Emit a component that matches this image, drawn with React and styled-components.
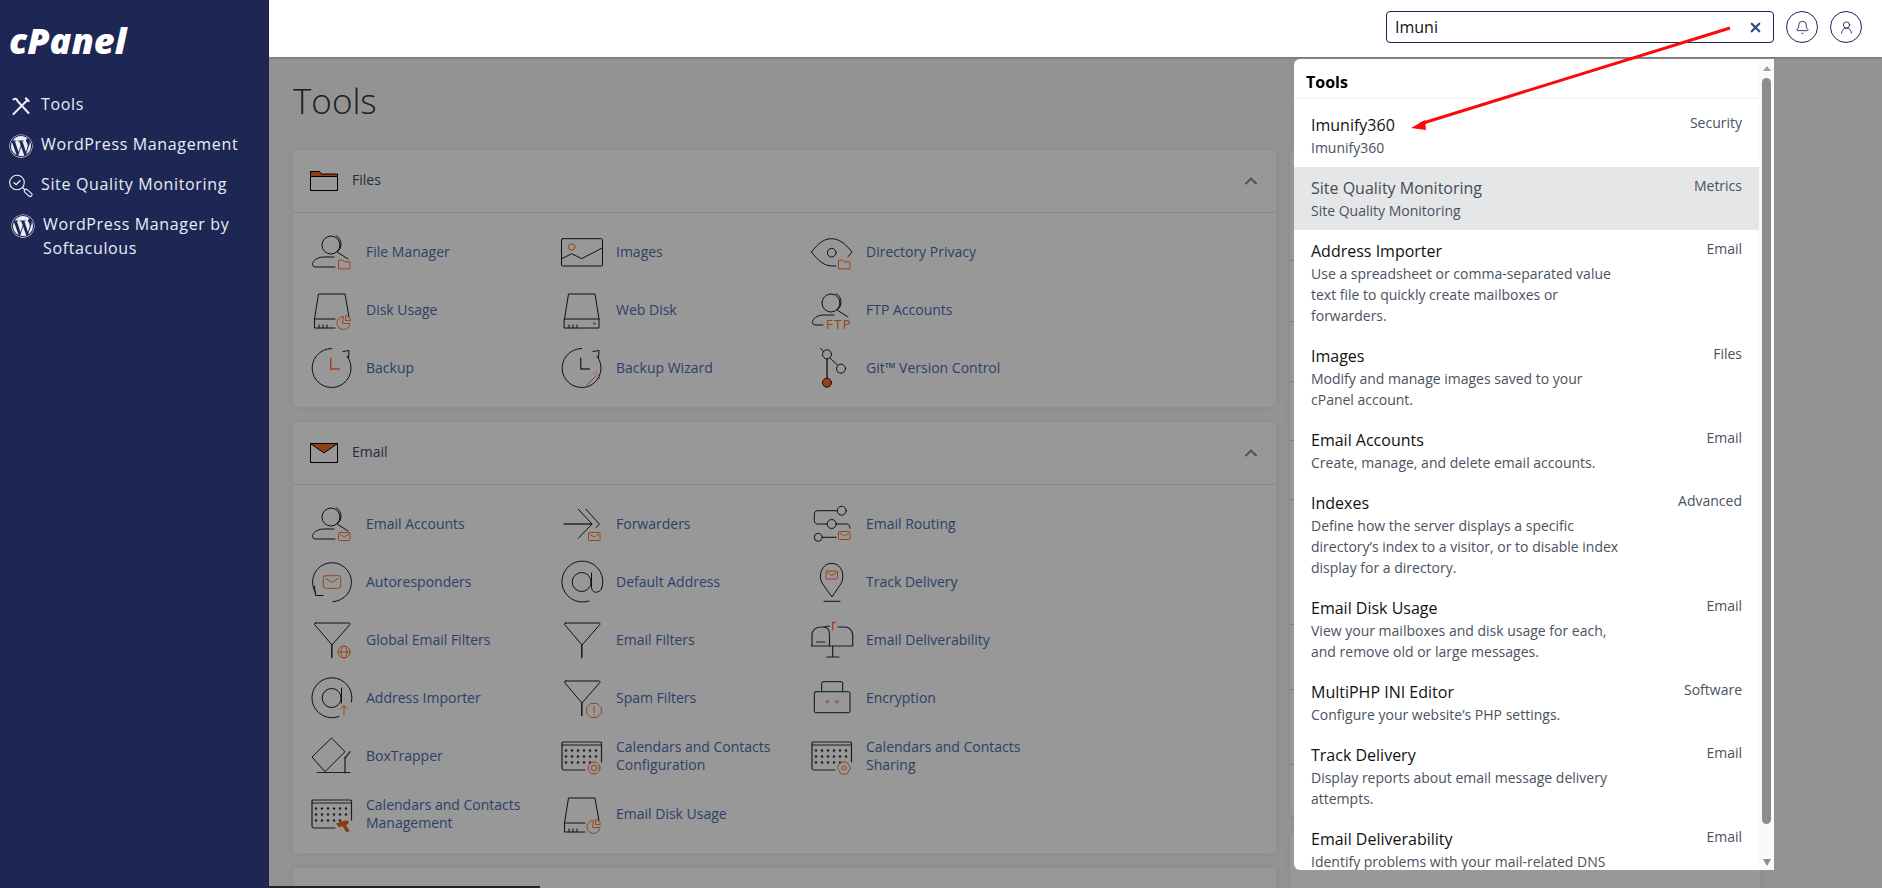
import React from "react";
import styled, { createGlobalStyle } from "styled-components";
import { Bell, ChevronUp, UserRound, X } from "lucide-react";
import { FaWordpress } from "react-icons/fa";

const ORANGE = "#ff7430";
const INK = "#1c1c1c";

const GlobalStyle = createGlobalStyle`
  html, body { margin: 0; padding: 0; height: 100%; }
  body { font-family: "Open Sans", "Liberation Sans", sans-serif; background: #f6f6f6; }
  * { box-sizing: border-box; }
`;

const Page = styled.div`
  position: relative;
  display: flex;
  width: 100%;
  height: 100vh;
  overflow: hidden;
`;

const Sidebar = styled.aside`
  flex: 0 0 269px;
  background: #1e2653;
  color: #eef1f8;
  padding: 0 8px 0 9px;
`;

const Logo = styled.div`
  height: 92px;
  padding-top: 21px;
  font-size: 36px;
  line-height: 40px;
  font-weight: 800;
  font-style: italic;
  letter-spacing: 0;
  color: #fff;
`;

const NavList = styled.nav`
  display: flex;
  flex-direction: column;
  gap: 14px;
`;

const NavItem = styled.div`
  display: flex;
  align-items: flex-start;
  gap: 8px;
  padding-left: ${(p) => (p.$shift ? "2px" : "0")};
  font-size: 16px;
  line-height: 24px;
  letter-spacing: 0.65px;
  color: #e9edf6;
`;

const NavIcon = styled.span`
  flex: 0 0 24px;
  height: 24px;
  margin-top: 2px;
  display: flex;
  align-items: center;
  justify-content: center;
`;

const Main = styled.div`
  flex: 1;
  min-width: 0;
  display: flex;
  flex-direction: column;
`;

const TopBar = styled.header`
  position: relative;
  z-index: 3;
  flex: 0 0 57px;
  background: #fff;
  display: flex;
  align-items: center;
  justify-content: flex-end;
  gap: 12px;
  padding: 0 20px 3px 0;
  box-shadow: 0 1px 2px rgba(0, 0, 0, 0.25);
`;

const SearchBox = styled.div`
  width: 388px;
  height: 32px;
  border: 1px solid #1e2653;
  border-radius: 4px;
  display: flex;
  align-items: center;
  justify-content: space-between;
  padding: 0 10px 0 8px;
  font-size: 16px;
  color: #111;
`;

const RoundButton = styled.span`
  width: 32px;
  height: 32px;
  border: 1px solid #1e2653;
  border-radius: 50%;
  display: flex;
  align-items: center;
  justify-content: center;
  color: #1e2653;
`;

const Content = styled.main`
  position: relative;
  flex: 1;
  min-height: 0;
  overflow: hidden;
  padding: 20px 0 0 24px;
`;

const Shade = styled.div`
  position: absolute;
  inset: 0;
  z-index: 1;
  background: rgba(0, 0, 0, 0.4);
`;

const Title = styled.h1`
  margin: 0 0 25px;
  font-size: 35px;
  line-height: 48px;
  font-weight: 300;
  color: #333;
`;

const Columns = styled.div`
  display: flex;
  gap: 14px;
  align-items: flex-start;
`;

const LeftColumn = styled.div`
  flex: 0 0 983px;
  display: flex;
  flex-direction: column;
  gap: 15px;
`;

const RightColumn = styled.div`
  flex: 0 0 470px;
  display: flex;
  flex-direction: column;
  gap: 15px;
`;

const Card = styled.section`
  background: #fdfdfd;
  border-radius: 4px;
  box-shadow: 0 0 8px rgba(0, 0, 0, 0.08);
`;

const CardHeader = styled.div`
  height: 63px;
  display: flex;
  align-items: center;
  gap: 14px;
  padding: 0 15px 0 17px;
  border-bottom: 1px solid #dfe3ea;
  font-size: 14px;
  color: #3b4a66;
`;

const HeaderLabel = styled.span`
  flex: 1;
  margin-top: -3px;
`;

const CardBody = styled.div`
  display: grid;
  grid-template-columns: repeat(3, 250px);
  grid-auto-rows: 58px;
  padding: 10px 18px;
`;

const ToolLink = styled.a`
  display: flex;
  align-items: center;
  gap: 15px;
  font-size: 14px;
  line-height: 18px;
  color: #4c6cad;
`;

const IconSvg = styled.svg`
  flex: 0 0 40px;
  width: 40px;
  height: 40px;
  overflow: visible;
  fill: none;
  stroke: ${INK};
  stroke-width: 1;
  stroke-linecap: round;
  stroke-linejoin: round;
`;

const EmptyCard = styled(Card)`
  height: ${(p) => p.$height}px;
`;

const SideRow = styled.div`
  height: ${(p) => p.$height}px;
  border-bottom: 1px solid #d4d8df;
`;

const Dropdown = styled.div`
  position: absolute;
  z-index: 2;
  top: 2px;
  left: 1025px;
  width: 480px;
  height: 811px;
  display: flex;
  background: #fff;
  border-radius: 6px 0 0 6px;
  overflow: hidden;
`;

const ResultsPane = styled.div`
  flex: 1;
  min-width: 0;
  overflow: hidden;
`;

const ResultsHeading = styled.div`
  height: 40px;
  padding: 6px 0 0 12px;
  border-bottom: 1px solid #f1f1f1;
  font-size: 16px;
  line-height: 24px;
  font-weight: 700;
  color: #000;
  display: flex;
  align-items: center;
  margin-bottom: 5px;
`;

const ResultRow = styled.div`
  display: flex;
  justify-content: space-between;
  padding: 9px 17px;
  background: ${(p) => (p.$active ? "#e5e6e8" : "transparent")};
`;

const ResultText = styled.div`
  width: 314px;
`;

const ResultName = styled.div`
  font-size: 16px;
  line-height: 24px;
  color: ${(p) => (p.$active ? "#444b55" : "#111")};
`;

const ResultDesc = styled.div`
  font-size: 14px;
  line-height: 21px;
  color: #4a5260;
`;

const ResultGroup = styled.div`
  margin-top: -1px;
  font-size: 14px;
  line-height: 21px;
  color: #4a5260;
`;

const ScrollTrack = styled.div`
  flex: 0 0 15px;
  background: #fafafa;
  display: flex;
  flex-direction: column;
  align-items: center;
  padding: 7px 0 4px;
`;

const ScrollThumb = styled.div`
  width: 9px;
  height: 746px;
  margin: 7px 0 auto;
  border-radius: 5px;
  background: #8d8d8d;
`;

const ScrollArrow = styled.div`
  width: 0;
  height: 0;
  border-left: 4.5px solid transparent;
  border-right: 4.5px solid transparent;
  ${(p) =>
    p.$down
      ? "border-top: 7px solid #8d8d8d;"
      : "border-bottom: 5px solid #a0a0a0;"}
`;

const BottomStrip = styled.div`
  position: absolute;
  z-index: 2;
  left: 0;
  bottom: 0;
  width: 271px;
  height: 2px;
  background: #232323;
`;

const Annotation = styled.svg`
  position: absolute;
  inset: 0;
  z-index: 5;
  width: 100%;
  height: 100%;
  pointer-events: none;
`;

// small orange badges shared by the tool icons
const MiniFolder = () => (
  <path stroke={ORANGE} d="M27.5 36.5v-8.3h4.6l1.2 1.6h5.7v6.7z" />
);

const MiniMail = ({ x = 27.5, y = 28.5 }) => (
  <g stroke={ORANGE} transform={`translate(${x} ${y})`}>
    <rect width="11.5" height="8" rx="1" />
    <path d="M1.5 1.8l4.3 2.8 4.3-2.8" />
  </g>
);

const Person = () => (
  <>
    <circle cx="20" cy="13" r="9" />
    <path d="M25 3.5c6 3 7 12.500 1 16.500l11 7" />
    <path d="M24 35H5c-3 0-4-2-3.500-3.500C3 27 8 25 13 25h10" />
  </>
);

const DiskShell = ({ closed }) => (
  <>
    <path d={closed ? "M3.500 29L7.500 4H34l4 25" : "M3.500 29L7.500 4H34l4 23"} />
    <path d={closed ? "M3.500 29H38v9H3.500z" : "M24 29H3.500v9H24"} />
    <path d="M8 38v-3M12 38v-3M16 38v-3" />
  </>
);

const DiskPie = () => (
  <g stroke={ORANGE}>
    <path d="M32 26.500a6.500 6.500 0 1 0 7 7h-7z" />
    <path d="M35 25.500c2.500.5 4 2.500 4.500 5H35z" />
  </g>
);

const ClockRing = () => (
  <>
    <path d="M20.700.5A19.500 19.500 0 1 0 36 8" />
    <path d="M32 3.500l6-1 -.5 7.500" />
  </>
);

const Funnel = () => (
  <>
    <path d="M4.500 3h33.500c1 0 1.300 1 .7 1.700L21 25 3.700 4.700C3.100 4 3.500 3 4.500 3z" />
    <path d="M20.800 25v12.500" strokeWidth="1.600" stroke="#3a3a3a" />
  </>
);

const AtRing = ({ bare }) => (
  <>
    <path
      d={
        bare
          ? "M40.500 27A20.500 20.500 0 1 0 28 39"
          : "M40.500 24A20 20 0 1 0 28 38.500"
      }
    />
    <circle cx="20.700" cy="20" r="9.500" />
    <path
      d={bare ? "M30.500 11v14c0 4 3 6 6 5s4-3 4-4" : "M30.500 10v15"}
    />
  </>
);

const KeyDots = () => {
  const dots = [];
  [14.5, 20.5, 26.5].forEach((y, row) => {
    const count = row === 2 ? 5 : 6;
    for (let i = 0; i < count; i++) {
      dots.push(<circle key={`${row}-${i}`} cx={5 + i * 6} cy={y} r="1.200" />);
    }
  });
  return <g fill="#333" stroke="none">{dots}</g>;
};

const Keyboard = () => (
  <>
    <path d="M24 34H3c-1 0-2-1-2-2V7c0-.5.5-1 1-1h37c1 0 1.500.5 1.500 1v19" strokeWidth="1.200" stroke="#333" />
    <path d="M1 9h39.500" stroke="#333" />
    <KeyDots />
  </>
);

const ICONS = {
  fileManager: (<><Person /><MiniFolder /></>),
  images: (
    <>
      <rect x="0.500" y="6.700" width="41" height="27.300" rx="1" />
      <path d="M.7 26.700l10-5 10 5 21-11" />
      <circle cx="10.700" cy="15" r="3.200" stroke={ORANGE} />
    </>
  ),
  privacy: (
    <>
      <path d="M.5 20C8 10 14 6.700 20.700 6.700S34 11 41 20c-1 2-2.500 3.500-4 4.500" />
      <path d="M.5 20c7.500 10 13.500 14 21.500 14h3" />
      <circle cx="20.700" cy="20.700" r="4.300" />
      <MiniFolder />
    </>
  ),
  diskUsage: (<><DiskShell /><DiskPie /></>),
  webDisk: (
    <>
      <DiskShell closed />
      <circle cx="33.500" cy="33.500" r="1" fill={ORANGE} stroke={ORANGE} />
    </>
  ),
  ftp: (
    <>
      <circle cx="20" cy="13" r="9" />
      <path d="M25 3.500c6 3 7 12.500 1 16.500l11 7" />
      <path d="M12 35H5c-3 0-4-2-3.500-3.500C3 27 8 25 13 25h10" />
      <text x="15" y="38.500" fontSize="13" letterSpacing="1.500" fill={ORANGE} stroke="none" fontFamily="Open Sans, sans-serif">FTP</text>
    </>
  ),
  backup: (
    <>
      <ClockRing />
      <path stroke={ORANGE} strokeWidth="1.400" d="M19.700 10.300V21h8.600" />
    </>
  ),
  backupWizard: (
    <>
      <ClockRing />
      <path stroke="#444" strokeWidth="1.400" d="M19.700 10.300V21h8.600" />
      <path stroke={ORANGE} d="M26 37l9-9M33 26v.5M37 26.500v.5M38.500 30v.5M35 24v.5" />
    </>
  ),
  git: (
    <>
      <path d="M9.700.3l3 3.500M19 10l7.500 7" />
      <circle cx="16" cy="6.300" r="4.500" />
      <circle cx="30" cy="20.700" r="4.500" />
      <path d="M16 11v19" strokeWidth="1.600" stroke="#444" />
      <circle cx="16" cy="34.700" r="4.500" fill="#ff6a20" />
    </>
  ),
  emailAccounts: (<><Person /><MiniMail /></>),
  forwarders: (
    <>
      <path d="M3 20h27.700" strokeWidth="1.400" stroke="#444" />
      <path d="M17.300 5.300L31 20 17.300 34.300M25 5.300L38.300 20l-3 3.500" />
      <MiniMail />
    </>
  ),
  emailRouting: (
    <>
      <circle cx="30.700" cy="6.700" r="4.500" />
      <path d="M26.200 6.700H7c-2.500 0-3.700 1.500-3.700 3.500v6c0 2.500 1.500 3.800 3.700 3.800h9.200" />
      <circle cx="20.700" cy="20" r="4.500" />
      <path d="M25.200 20H35c2.500 0 4 1.500 4 4.300" />
      <circle cx="7.300" cy="33.300" r="4" />
      <path d="M11.300 33.300h14" />
      <MiniMail y="27.500" />
    </>
  ),
  autoresponders: (
    <>
      <path d="M21.700 39.700A19.500 19.500 0 1 0 4.700 31" />
      <path d="M3.500 24l1 9.500H12" />
      <g stroke={ORANGE}>
        <rect x="12.300" y="13.700" width="17.400" height="12.600" rx="2" />
        <path d="M15 16.500l6 4 6-4" />
      </g>
    </>
  ),
  defaultAddress: (<AtRing bare />),
  trackDelivery: (
    <>
      <path d="M20.700 34.700L11 21c-4-7-.5-19.700 9.700-19.700S34.300 14 30.400 21z" />
      <path d="M13 39.300h16" />
      <MiniMail x="15" y="9" />
    </>
  ),
  globalFilters: (
    <>
      <Funnel />
      <g stroke={ORANGE}>
        <circle cx="33" cy="32" r="6" />
        <ellipse cx="33" cy="32" rx="2.800" ry="6" />
        <path d="M27 32h12" />
      </g>
    </>
  ),
  emailFilters: (<Funnel />),
  deliverability: (
    <>
      <path d="M1 26V15c0-5 4-8 9-8h2.500c4.500 0 6 4 6 8v11" strokeWidth="1.200" stroke="#333" />
      <path d="M.7 26h41V15c0-4.500-3.500-8-8-8H27M13 7l5.500-1" strokeWidth="1.200" stroke="#333" />
      <path d="M21.700 26v11M15.700 37H28M5.700 22H14" strokeWidth="1.200" stroke="#333" />
      <path stroke={ORANGE} strokeWidth="1.300" d="M21.700 10V2.300h3" />
    </>
  ),
  addressImporter: (
    <>
      <AtRing />
      <path stroke={ORANGE} d="M33 37v-9M29.500 31l3.500-3.500 3.500 3.500" />
    </>
  ),
  spamFilters: (
    <>
      <Funnel />
      <g stroke={ORANGE}>
        <path d="M30 25.500h6l4.300 4.300v5.400L36 39.500h-6l-4.300-4.300v-5.400z" />
        <path d="M33 28.500v6M33 36.500v.5" />
      </g>
    </>
  ),
  encryption: (
    <>
      <path d="M10.700 13V5c0-.8.5-1.300 1.300-1.300h18.500c.8 0 1.200.5 1.200 1.300v8" />
      <rect x="3.300" y="13.700" width="35.700" height="21" rx="1.500" />
      <circle cx="16.300" cy="23.700" r="1.200" stroke={ORANGE} />
      <circle cx="25.700" cy="23.700" r="1.200" stroke={ORANGE} />
    </>
  ),
  boxTrapper: (
    <>
      <path d="M20.700 2.300L34 15.700 14 35.700 1.300 21.300z" />
      <path d="M6.300 36.500H39M34 37V21M34 22.300l5-6.600" strokeWidth="1.200" stroke="#333" />
    </>
  ),
  calendarConfig: (
    <>
      <Keyboard />
      <g stroke={ORANGE}>
        <circle cx="33" cy="32" r="6" />
        <circle cx="33" cy="32" r="2.800" />
      </g>
    </>
  ),
  calendarManage: (
    <>
      <Keyboard />
      <path fill="#e8610f" stroke="none" d="M25 29.500l9-3 4 .5-1 3-2 1 3.500 6-3 1.500-4-6.500-3.500 1.500z" />
    </>
  ),
  calendarSharing: (
    <>
      <Keyboard />
      <g stroke={ORANGE}>
        <path d="M30 26h6l3.500 6-3.500 6h-6l-3.500-6z" />
        <circle cx="33" cy="32" r="2.200" />
      </g>
    </>
  ),
  emailDisk: (<><DiskShell /><DiskPie /></>),
};

const ToolIcon = ({ name }) => <IconSvg viewBox="0 0 40 40">{ICONS[name]}</IconSvg>;

const FolderGlyph = () => (
  <svg width="28" height="20" viewBox="0 0 28 20">
    <path d="M.5.5h9l2 2.500h16v2.500H.5z" fill="#f06a20" />
    <path d="M.5 5.500V.5h9l2 2.500h16v16.500H.5zM.5 5.500h27" fill="none" stroke="#000" />
  </svg>
);

const MailGlyph = () => (
  <svg width="28" height="20" viewBox="0 0 28 20">
    <path d="M.5.5h27L14 10z" fill="#f06a20" />
    <path d="M.5.5h27v19H.5zM.5.5L14 10 27.500.5" fill="none" stroke="#000" />
  </svg>
);

const ToolsGlyph = () => (
  <svg width="18" height="18" viewBox="0 0 18 18" fill="none" stroke="#eef1f8" strokeWidth="1.500" strokeLinecap="round">
    <path d="M1.500 17L9 9.500M11 7.500l4-4" strokeWidth="2" />
    <path d="M14 1.500l2.500 2.500" strokeWidth="2.400" />
    <path d="M1.500 2.500c2-1.500 3.500-.5 4 1.500L16.500 16" strokeWidth="2" />
  </svg>
);

const MonitorGlyph = () => (
  <svg width="24" height="24" viewBox="0 0 24 24" fill="none" stroke="#eef1f8" strokeWidth="1.100" strokeLinecap="round">
    <circle cx="8" cy="8.500" r="7.300" />
    <path d="M5 8.700l2.200 2 3.800-4" strokeWidth="1.300" />
    <path d="M13.500 13.500l2 2" />
    <rect x="14.500" y="17" width="9" height="3.600" rx="1.800" transform="rotate(42 19 19)" />
  </svg>
);

const NAV = [
  { label: "Tools", icon: <ToolsGlyph /> },
  { label: "WordPress Management", icon: <FaWordpress size={24} /> },
  { label: "Site Quality Monitoring", icon: <MonitorGlyph /> },
  { label: "WordPress Manager by Softaculous", icon: <FaWordpress size={24} />, shift: true },
];

const FILES = [
  ["fileManager", "File Manager"],
  ["images", "Images"],
  ["privacy", "Directory Privacy"],
  ["diskUsage", "Disk Usage"],
  ["webDisk", "Web Disk"],
  ["ftp", "FTP Accounts"],
  ["backup", "Backup"],
  ["backupWizard", "Backup Wizard"],
  ["git", "Git™ Version Control"],
];

const EMAIL = [
  ["emailAccounts", "Email Accounts"],
  ["forwarders", "Forwarders"],
  ["emailRouting", "Email Routing"],
  ["autoresponders", "Autoresponders"],
  ["defaultAddress", "Default Address"],
  ["trackDelivery", "Track Delivery"],
  ["globalFilters", "Global Email Filters"],
  ["emailFilters", "Email Filters"],
  ["deliverability", "Email Deliverability"],
  ["addressImporter", "Address Importer"],
  ["spamFilters", "Spam Filters"],
  ["encryption", "Encryption"],
  ["boxTrapper", "BoxTrapper"],
  ["calendarConfig", "Calendars and Contacts Configuration"],
  ["calendarSharing", "Calendars and Contacts Sharing"],
  ["calendarManage", "Calendars and Contacts Management"],
  ["emailDisk", "Email Disk Usage"],
];

const RESULTS = [
  { name: "Imunify360", desc: "Imunify360", group: "Security" },
  { name: "Site Quality Monitoring", desc: "Site Quality Monitoring", group: "Metrics", active: true },
  { name: "Address Importer", desc: "Use a spreadsheet or comma-separated value text file to quickly create mailboxes or forwarders.", group: "Email" },
  { name: "Images", desc: "Modify and manage images saved to your cPanel account.", group: "Files" },
  { name: "Email Accounts", desc: "Create, manage, and delete email accounts.", group: "Email" },
  { name: "Indexes", desc: "Define how the server displays a specific directory’s index to a visitor, or to disable index display for a directory.", group: "Advanced" },
  { name: "Email Disk Usage", desc: "View your mailboxes and disk usage for each, and remove old or large messages.", group: "Email" },
  { name: "MultiPHP INI Editor", desc: "Configure your website’s PHP settings.", group: "Software" },
  { name: "Track Delivery", desc: "Display reports about email message delivery attempts.", group: "Email" },
  { name: "Email Deliverability", desc: "Identify problems with your mail-related DNS records.", group: "Email" },
];

const SIDE_ROWS = [111, 61, 60, 59, 59, 125, 65, 75, 53];

const ToolCard = ({ glyph, title, tools }) => (
  <Card>
    <CardHeader>
      {glyph}
      <HeaderLabel>{title}</HeaderLabel>
      <ChevronUp size={20} strokeWidth={2.5} color="#7c8ba6" />
    </CardHeader>
    <CardBody>
      {tools.map(([icon, label]) => (
        <ToolLink key={label}>
          <ToolIcon name={icon} />
          <span>{label}</span>
        </ToolLink>
      ))}
    </CardBody>
  </Card>
);

const App = () => (
  <Page>
    <GlobalStyle />
    <Sidebar>
      <Logo>cPanel</Logo>
      <NavList>
        {NAV.map((item) => (
          <NavItem key={item.label} $shift={item.shift}>
            <NavIcon>{item.icon}</NavIcon>
            <span>{item.label}</span>
          </NavItem>
        ))}
      </NavList>
    </Sidebar>
    <Main>
      <TopBar>
        <SearchBox>
          <span>Imuni</span>
          <X size={15} strokeWidth={3.5} color="#2f4a85" />
        </SearchBox>
        <RoundButton>
          <Bell size={15} strokeWidth={1.4} />
        </RoundButton>
        <RoundButton>
          <UserRound size={15} strokeWidth={1.4} />
        </RoundButton>
      </TopBar>
      <Content>
        <Title>Tools</Title>
        <Columns>
          <LeftColumn>
            <ToolCard glyph={<FolderGlyph />} title="Files" tools={FILES} />
            <ToolCard glyph={<MailGlyph />} title="Email" tools={EMAIL} />
            <EmptyCard $height={100} />
          </LeftColumn>
          <RightColumn>
            <Card>
              {SIDE_ROWS.map((h, i) => (
                <SideRow key={i} $height={h} />
              ))}
            </Card>
            <EmptyCard $height={100} />
          </RightColumn>
        </Columns>
        <Shade />
        <Dropdown>
          <ResultsPane>
            <ResultsHeading>Tools</ResultsHeading>
            {RESULTS.map((r) => (
              <ResultRow key={r.name} $active={r.active}>
                <ResultText>
                  <ResultName $active={r.active}>{r.name}</ResultName>
                  <ResultDesc>{r.desc}</ResultDesc>
                </ResultText>
                <ResultGroup>{r.group}</ResultGroup>
              </ResultRow>
            ))}
          </ResultsPane>
          <ScrollTrack>
            <ScrollArrow />
            <ScrollThumb />
            <ScrollArrow $down />
          </ScrollTrack>
        </Dropdown>
        <BottomStrip />
      </Content>
    </Main>
    <Annotation viewBox="0 0 1882 888">
      <path d="M1730 28L1420 124" stroke="#fa0a0a" strokeWidth="3" />
      <path d="M1411 128l14-8 1 10z" fill="#fa0a0a" />
    </Annotation>
  </Page>
);

export default App;
